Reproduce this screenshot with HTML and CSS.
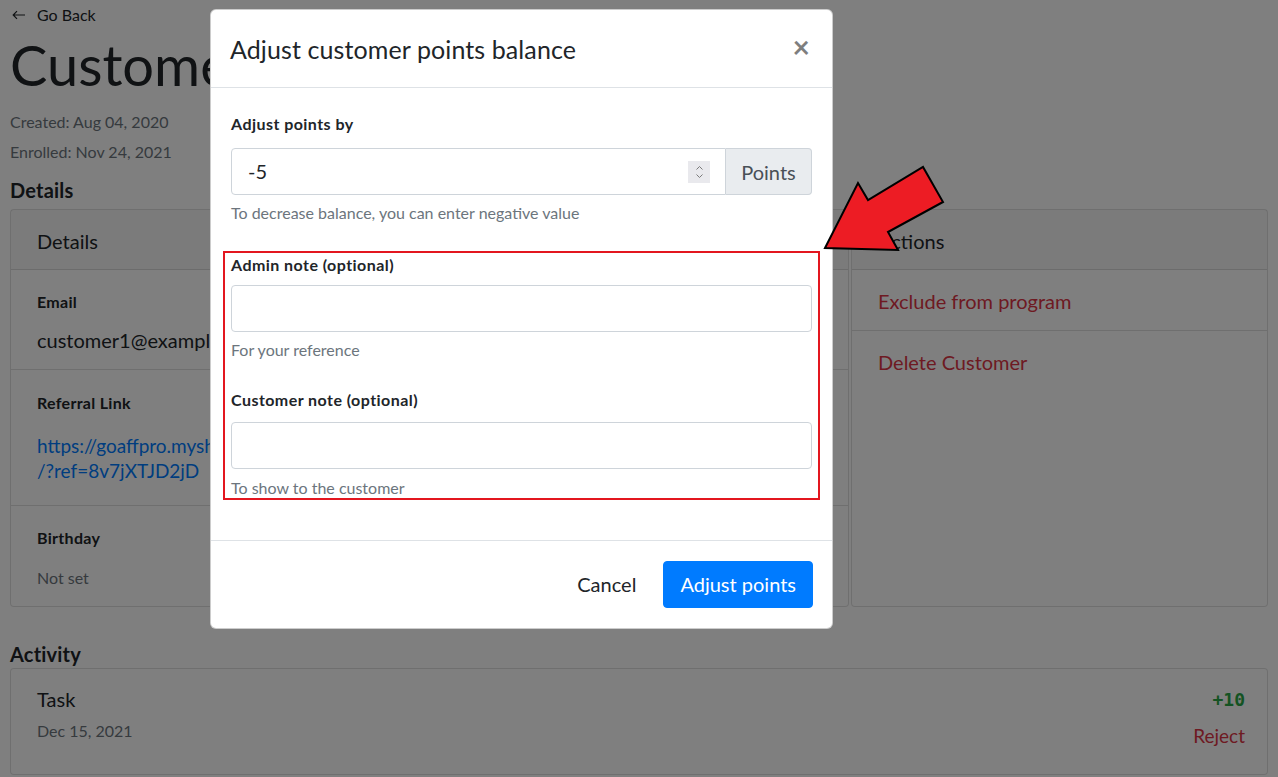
FILE: index.html
```html
<!DOCTYPE html>
<html lang="en">
<head>
<meta charset="utf-8">
<title>Customer</title>
<link rel="stylesheet" href="styles.css">
</head>
<body>
<div class="page">
  <div class="back">
    <svg class="back-icon" width="14" height="10" viewBox="0 0 14 10"><path d="M13 5H1.5M5 1.2L1.2 5 5 8.8" fill="none" stroke="#212529" stroke-width="1.2"/></svg>
    <span>Go Back</span>
  </div>
  <h1 class="title">Customer</h1>
  <div class="meta">Created: Aug 04, 2020</div>
  <div class="meta">Enrolled: Nov 24, 2021</div>
  <h2 class="section">Details</h2>
  <div class="grid">
    <div class="card">
      <div class="card-header">Details</div>
      <div class="item item-email">
        <div class="label">Email</div>
        <div class="value">customer1@example.com</div>
      </div>
      <div class="item item-ref">
        <div class="label">Referral Link</div>
        <a class="link" href="#"><span>https://goaffpro.myshopify.com</span><span>/?ref=8v7jXTJD2jD</span></a>
      </div>
      <div class="item item-bday">
        <div class="label">Birthday</div>
        <div class="muted">Not set</div>
      </div>
    </div>
    <div class="card">
      <div class="card-header">Actions</div>
      <div class="action action-first">Exclude from program</div>
      <div class="action">Delete Customer</div>
    </div>
  </div>
  <h2 class="section section-activity">Activity</h2>
  <div class="card activity">
    <div class="activity-left">
      <div class="value">Task</div>
      <div class="muted">Dec 15, 2021</div>
    </div>
    <div class="activity-right">
      <div class="points">+10</div>
      <div class="reject">Reject</div>
    </div>
  </div>
</div>

<div class="overlay"></div>

<div class="modal">
  <div class="modal-header">
    <h5 class="modal-title">Adjust customer points balance</h5>
    <span class="close">×</span>
  </div>
  <div class="modal-body">
    <label class="form-label">Adjust points by</label>
    <div class="input-group">
      <div class="input input-number">
        <span>-5</span>
        <span class="spinner">
          <svg width="9" height="16" viewBox="0 0 9 16"><path d="M1.5 5.5L4.5 2.5 7.5 5.5M1.5 10.5L4.5 13.5 7.5 10.5" fill="none" stroke="#7a7a7a" stroke-width="1"/></svg>
        </span>
      </div>
      <div class="addon">Points</div>
    </div>
    <div class="help">To decrease balance, you can enter negative value</div>

    <div class="highlight">
      <label class="form-label">Admin note (optional)</label>
      <div class="input"></div>
      <div class="help">For your reference</div>
      <label class="form-label form-label-2">Customer note (optional)</label>
      <div class="input input-2"></div>
      <div class="help help-last">To show to the customer</div>
    </div>
  </div>
  <div class="modal-footer">
    <button class="btn btn-link">Cancel</button>
    <button class="btn btn-primary">Adjust points</button>
  </div>
</div>

<svg class="arrow" width="1278" height="777" viewBox="0 0 1278 777">
  <polygon points="825,248 858,183 868,200 923,167 943,202 888,232 898,250" fill="#ed1c24" stroke="#000" stroke-width="2" stroke-linejoin="miter"/>
</svg>
</body>
</html>
```

FILE: styles.css
```css
* { box-sizing: border-box; }
html, body { margin: 0; padding: 0; }
body {
  font-family: "Lato", "Noto Sans", sans-serif;
  color: #212529;
  background: #fff;
  width: 1278px;
  height: 777px;
  overflow: hidden;
  position: relative;
}

.page { padding: 3px 10px 0; }

.back {
  display: flex;
  align-items: center;
  gap: 11px;
  height: 24px;
  font-size: 16px;
  line-height: 24px;
  padding-left: 2px;
}

.title {
  font-size: 56px;
  font-weight: 400;
  line-height: 62px;
  margin: 7px 0 11px;
}

.meta {
  font-size: 16px;
  line-height: 30px;
  color: #6c757d;
}

.section {
  font-size: 20px;
  font-weight: 700;
  line-height: 26px;
  letter-spacing: .2px;
  margin: 10px 0 6px;
}
.section-activity { margin: 34px 0 1px; }

.grid {
  display: grid;
  grid-template-columns: 839px 1fr;
  gap: 2px;
}

.card {
  background: #fff;
  border: 1px solid rgba(0, 0, 0, .125);
  border-radius: 4px;
}

.card-header {
  background: rgba(0, 0, 0, .03);
  border-bottom: 1px solid rgba(0, 0, 0, .125);
  padding: 18px 26px 14px;
  font-size: 20px;
  line-height: 27px;
}

.item {
  padding: 21px 26px 15px;
  border-bottom: 1px solid rgba(0, 0, 0, .125);
}
.item:last-child { border-bottom: 0; }
.label {
  font-size: 16px;
  font-weight: 700;
  line-height: 22px;
  letter-spacing: .3px;
  margin-bottom: 14px;
}
.value {
  font-size: 20px;
  line-height: 27px;
}
.item-ref { padding: 22px 26px 22px; }
.item-ref .label { margin-bottom: 19px; }
.link {
  display: flex;
  flex-direction: column;
  color: #007bff;
  text-decoration: none;
  font-size: 19px;
  line-height: 25px;
}
.item-bday { padding: 21px 26px 17px; }
.item-bday .label { margin-bottom: 18px; }
.muted {
  font-size: 16px;
  line-height: 22px;
  color: #6c757d;
}

.action {
  color: #dc3545;
  font-size: 20px;
  line-height: 27px;
  padding: 18px 26px;
}
.action-first {
  padding: 18px 26px 15px;
  border-bottom: 1px solid rgba(0, 0, 0, .125);
}

.activity {
  display: flex;
  justify-content: space-between;
  padding: 17px 22px 25px 26px;
}
.activity-left .muted { margin-top: 7px; }
.activity-right {
  display: flex;
  flex-direction: column;
  align-items: flex-end;
}
.points {
  font-family: "DejaVu Sans Mono", "Liberation Mono", monospace;
  font-weight: 700;
  font-size: 18px;
  line-height: 27px;
  color: #28a745;
}
.reject {
  color: #dc3545;
  font-size: 19px;
  line-height: 27px;
  margin-top: 9px;
}

.overlay {
  position: absolute;
  inset: 0;
  background: rgba(0, 0, 0, .5);
}

.modal {
  position: absolute;
  left: 210px;
  top: 9px;
  width: 623px;
  background: #fff;
  border: 1px solid rgba(0, 0, 0, .2);
  border-radius: 6px;
}

.modal-header {
  display: flex;
  align-items: center;
  justify-content: space-between;
  padding: 21px 20px 20px 19px;
  border-bottom: 1px solid #dee2e6;
}
.modal-title {
  margin: 0;
  font-size: 25px;
  font-weight: 400;
  line-height: 36px;
  letter-spacing: .1px;
}
.close {
  font-size: 30px;
  font-weight: 700;
  line-height: 30px;
  color: #000;
  opacity: .5;
  margin-right: 2px;
  margin-top: -6px;
}

.modal-body { padding: 24px 20px 40px; }

.form-label {
  display: block;
  font-size: 16px;
  font-weight: 700;
  line-height: 24px;
  letter-spacing: .45px;
  margin-bottom: 12px;
}

.input-group { display: flex; }
.input {
  height: 47px;
  border: 1px solid #ced4da;
  border-radius: 4px;
  background: #fff;
  font-size: 20px;
  line-height: 27px;
}
.input-number {
  flex: 1;
  display: flex;
  align-items: center;
  justify-content: space-between;
  padding: 0 15px 0 16px;
  border-radius: 4px 0 0 4px;
}
.spinner {
  width: 22px;
  height: 22px;
  background: #e9e9ed;
  display: flex;
  align-items: center;
  justify-content: center;
}
.addon {
  width: 86px;
  height: 47px;
  display: flex;
  align-items: center;
  justify-content: center;
  background: #e9ecef;
  border: 1px solid #ced4da;
  border-left: 0;
  border-radius: 0 4px 4px 0;
  font-size: 20px;
  color: #495057;
}

.help {
  font-size: 16px;
  line-height: 20px;
  color: #6c757d;
  margin-top: 8px;
}

.highlight {
  margin: 28px -8px 0;
  padding: 0 6px;
  border: 2px solid #e3161f;
}
.highlight .form-label { margin-bottom: 8px; }
.highlight .form-label-2 { margin-top: 28px; margin-bottom: 10px; }
.help-last { margin-top: 9px; }

.modal-footer {
  display: flex;
  justify-content: flex-end;
  align-items: center;
  gap: 10px;
  padding: 20px 19px 20px;
  border-top: 1px solid #dee2e6;
}
.btn {
  font-family: inherit;
  font-size: 20px;
  line-height: 27px;
  height: 47px;
  border-radius: 4px;
  border: 1px solid transparent;
  cursor: pointer;
}
.btn-link {
  background: transparent;
  color: #212529;
  padding: 0 16px;
}
.btn-primary {
  background: #007bff;
  border-color: #007bff;
  color: #fff;
  padding: 0 16px;
}

.arrow {
  position: absolute;
  left: 0;
  top: 0;
  pointer-events: none;
}
```
